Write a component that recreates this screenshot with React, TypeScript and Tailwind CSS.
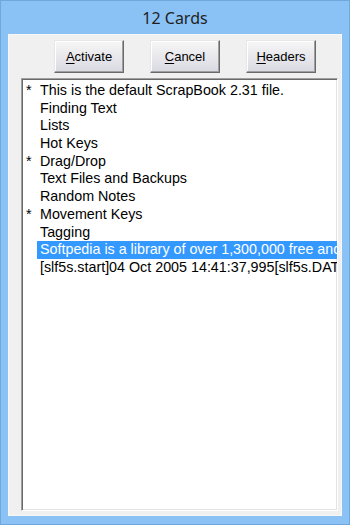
import React from "react";

const items: { star: boolean; text: string; selected?: boolean }[] = [
  { star: true, text: "This is the default ScrapBook 2.31 file." },
  { star: false, text: "Finding Text" },
  { star: false, text: "Lists" },
  { star: false, text: "Hot Keys" },
  { star: true, text: "Drag/Drop" },
  { star: false, text: "Text Files and Backups" },
  { star: false, text: "Random Notes" },
  { star: true, text: "Movement Keys" },
  { star: false, text: "Tagging" },
  { star: false, text: "Softpedia is a library of over 1,300,000 free and free-to-try software programs", selected: true },
  { star: false, text: "[slf5s.start]04 Oct 2005 14:41:37,995[slf5s.DATE]" },
];

function Btn({ u, rest }: { u: string; rest: string }) {
  return (
    <button className="w-[70px] h-[33px] flex items-center justify-center bg-linear-to-b from-[#f7f7f7] to-[#d9d9e2] border-t border-l border-t-[#e6e6e6] border-l-[#e6e6e6] border-r border-b border-r-[#6a6a6a] border-b-[#6a6a6a] shadow-[inset_-1px_-1px_0_#a0a0a0,inset_1px_1px_0_#ffffff] text-[13px] text-black" style={{ fontFamily: '"Liberation Sans", Arial, sans-serif' }}>
      <span>
        <span className="underline underline-offset-2">{u}</span>
        {rest}
      </span>
    </button>
  );
}

export default function App() {
  return (
    <div className="w-[350px] h-[525px] bg-[#8bc2f5] border border-[#6ea8dc] flex flex-col overflow-hidden">
      <div className="h-[33px] flex items-center justify-center text-[16px] text-[#1f1f1f] pt-[1px]" style={{ fontFamily: '"Noto Sans", "Open Sans", sans-serif' }}>
        12 Cards
      </div>
      <div className="flex-1 mx-[7px] mb-[8px] bg-[#f0f0f0] border border-[#f7f7f7] flex flex-col">
        <div className="flex gap-[26px] pl-[45px] pt-[5px]">
          <Btn u="A" rest="ctivate" />
          <Btn u="C" rest="ancel" />
          <Btn u="H" rest="eaders" />
        </div>
        <div className="mt-[5px] ml-[12px] mr-[3px] mb-[4px] flex-1 bg-white border-t border-l border-t-[#a0a0a0] border-l-[#a0a0a0] border-r border-b border-r-[#ffffff] border-b-[#ffffff] shadow-[inset_1px_1px_0_#696969,inset_-1px_-1px_0_#e3e3e3] overflow-hidden">
          <div className="pt-[3px] pl-[1px]" style={{ fontFamily: '"Liberation Sans", Arial, sans-serif' }}>
            {items.map((it, i) => (
              <div key={i} className="flex h-[17.7px] leading-[17.7px] text-[14.3px] text-black whitespace-nowrap">
                <div className="w-[14px] shrink-0 pl-[3px]">{it.star ? "*" : ""}</div>
                <div className={"flex-1 overflow-hidden pl-[3px] " + (it.selected ? "bg-[#3399ff] text-white" : "")}>
                  {it.text}
                </div>
              </div>
            ))}
          </div>
        </div>
      </div>
    </div>
  );
}
